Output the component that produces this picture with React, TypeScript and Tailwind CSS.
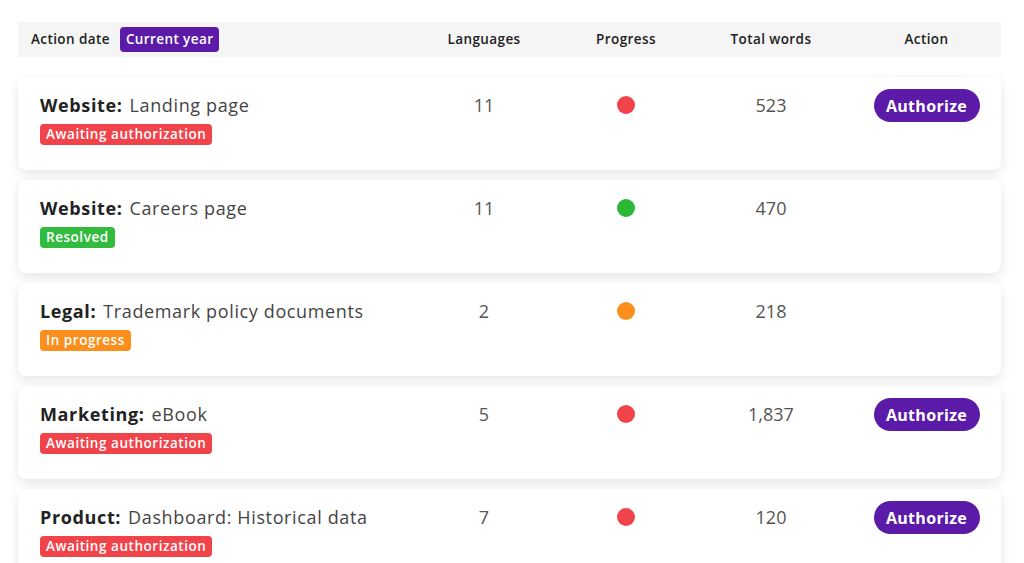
import React from 'react';

type Status = 'awaiting' | 'resolved' | 'progress';

const rows: { category: string; name: string; status: Status; languages: number; words: string }[] = [
  { category: 'Website', name: 'Landing page', status: 'awaiting', languages: 11, words: '523' },
  { category: 'Website', name: 'Careers page', status: 'resolved', languages: 11, words: '470' },
  { category: 'Legal', name: 'Trademark policy documents', status: 'progress', languages: 2, words: '218' },
  { category: 'Marketing', name: 'eBook', status: 'awaiting', languages: 5, words: '1,837' },
  { category: 'Product', name: 'Dashboard: Historical data', status: 'awaiting', languages: 7, words: '120' },
];

const badge: Record<Status, { label: string; cls: string; dot: string }> = {
  awaiting: { label: 'Awaiting authorization', cls: 'bg-[#f0434a]', dot: 'bg-[#f0434a]' },
  resolved: { label: 'Resolved', cls: 'bg-[#33bb3f]', dot: 'bg-[#2cb834]' },
  progress: { label: 'In progress', cls: 'bg-[#fb8e1c]', dot: 'bg-[#fb8e1c]' },
};

const cols = 'grid grid-cols-[396px_140px_144px_146px_1fr] items-center';

export default function App() {
  return (
    <div className="w-[1024px] h-[563px] overflow-hidden bg-white font-['Open_Sans',sans-serif]">
      <div className="pl-[18px] pr-[23px] pt-[22px]">
        {/* Header */}
        <div className={`${cols} h-[35px] bg-[#f5f5f5] text-[13.5px] tracking-[0.03em] font-semibold text-[#222]`}>
          <div className="flex items-center gap-[10px] pl-[13px]">
            <span>Action date</span>
            <span className="rounded-[4px] bg-[#5b1ba8] px-[6px] py-[2px] text-white">Current year</span>
          </div>
          <div className="text-center">Languages</div>
          <div className="text-center">Progress</div>
          <div className="text-center">Total words</div>
          <div className="text-center pl-[8px]">Action</div>
        </div>

        {/* Rows */}
        <div className="mt-[20px] flex flex-col gap-[10px]">
          {rows.map((r, i) => {
            const b = badge[r.status];
            return (
              <div
                key={i}
                className={`${cols} items-start h-[93px] rounded-[8px] bg-white shadow-[0_4px_12px_rgba(0,0,0,0.1)]`}
              >
                <div className="flex flex-col items-start gap-[7px] pl-[22px] pt-[17px]">
                  <div className="text-[18px] leading-[23px] tracking-[0.035em] text-[#444]">
                    <span className="font-bold text-[#222]">{r.category}:</span>
                    <span className="ml-[7px]">{r.name}</span>
                  </div>
                  <span className={`rounded-[4px] px-[6px] text-[13.5px] leading-[21px] tracking-[0.04em] font-semibold text-white ${b.cls}`}>
                    {b.label}
                  </span>
                </div>
                <div className="pt-[17px] text-center text-[18px] leading-[23px] text-[#555]">{r.languages}</div>
                <div className="pt-[19px] flex justify-center">
                  <span className={`block h-[18px] w-[18px] rounded-full ${b.dot}`} />
                </div>
                <div className="pt-[17px] text-center text-[18px] leading-[23px] text-[#555]">{r.words}</div>
                <div className="pt-[12px] pl-[8px] flex justify-center">
                  {r.status === 'awaiting' && (
                    <button className="h-[33px] w-[106px] rounded-full bg-[#5b1ba8] text-[16px] tracking-[0.02em] font-bold text-white">
                      Authorize
                    </button>
                  )}
                </div>
              </div>
            );
          })}
        </div>
      </div>
    </div>
  );
}
